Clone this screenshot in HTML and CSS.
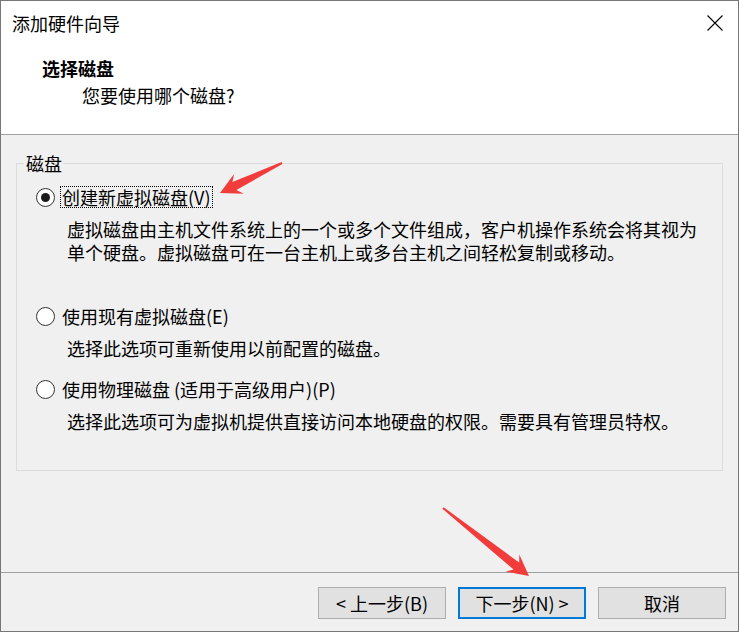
FILE: index.html
```html
<!DOCTYPE html>
<html lang="zh-CN">
<head>
<meta charset="utf-8">
<title>添加硬件向导</title>
<link rel="stylesheet" href="styles.css">
</head>
<body>
<div class="window">
  <div class="top">
    <div class="titlebar">
      <span class="title">添加硬件向导</span>
      <svg class="close" width="16" height="16" viewBox="0 0 16 16" aria-label="关闭">
        <path d="M0.5 0.5 L15.5 15.5 M15.5 0.5 L0.5 15.5" stroke="#000" stroke-width="1.1" fill="none"/>
      </svg>
    </div>
    <div class="header">
      <div class="heading">选择磁盘</div>
      <div class="subheading">您要使用哪个磁盘?</div>
    </div>
  </div>
  <div class="content">
    <fieldset class="group">
      <legend>磁盘</legend>
      <div class="options">
        <div class="option">
          <div class="choice"><span class="radio checked"></span><span class="label focus">创建新虚拟磁盘(V)</span></div>
          <p class="desc desc-tall">虚拟磁盘由主机文件系统上的一个或多个文件组成，客户机操作系统会将其视为单个硬盘。虚拟磁盘可在一台主机上或多台主机之间轻松复制或移动。</p>
        </div>
        <div class="option">
          <div class="choice"><span class="radio"></span><span class="label">使用现有虚拟磁盘(E)</span></div>
          <p class="desc">选择此选项可重新使用以前配置的磁盘。</p>
        </div>
        <div class="option">
          <div class="choice"><span class="radio"></span><span class="label">使用物理磁盘 (适用于高级用户)(P)</span></div>
          <p class="desc">选择此选项可为虚拟机提供直接访问本地硬盘的权限。需要具有管理员特权。</p>
        </div>
      </div>
    </fieldset>
  </div>
  <div class="footer">
    <button class="btn">&lt; 上一步(B)</button>
    <button class="btn btn-default">下一步(N) &gt;</button>
    <button class="btn">取消</button>
  </div>
  <svg class="annotations" width="739" height="632" viewBox="0 0 739 632">
    <polygon fill="#f23c3c" points="282.4,163.9 236.4,190.1 243.7,193.8 220,193 234.1,174.0 232.4,182.0 281.6,162.1"/>
    <polygon fill="#f23c3c" points="443.6,507.2 519.2,562.6 519.3,554.4 529,576 505.7,571.6 513.6,569.6 442.4,508.8"/>
  </svg>
</div>
</body>
</html>
```
FILE: styles.css
```css
* {
  box-sizing: border-box;
}

body {
  margin: 0;
  font-family: "Noto Sans CJK SC", sans-serif;
  font-size: 18px;
  color: #000;
  background: #fff;
}

.window {
  position: relative;
  width: 739px;
  height: 632px;
  border: 1px solid #777;
  display: flex;
  flex-direction: column;
  background: #f0f0f0;
}

.top {
  height: 134px;
  flex: none;
  background: #fff;
  border-bottom: 1px solid #a0a0a0;
}

.titlebar {
  height: 44px;
  display: flex;
  align-items: center;
  justify-content: space-between;
  padding: 0 15px 0 11px;
}

.title {
  line-height: 24px;
}

.close {
  display: block;
}

.header {
  padding: 11px 0 0 41px;
}

.heading {
  font-weight: 700;
  line-height: 24px;
}

.subheading {
  line-height: 24px;
  margin-top: 3px;
  padding-left: 40px;
}

.content {
  flex: 1;
  padding: 16px 15px 0;
}

.group {
  margin: 0;
  min-width: 0;
  border: 1px solid #dcdcdc;
  padding: 11px 14px 37px 7px;
}

.group legend {
  padding: 0 1px 0 2px;
  line-height: 24px;
}

.options {
  display: flex;
  flex-direction: column;
  gap: 18px;
  padding-left: 12px;
}

.option {
  display: flex;
  flex-direction: column;
}

.choice {
  display: flex;
  align-items: center;
  height: 22px;
}

.radio {
  width: 19px;
  height: 19px;
  flex: none;
  border: 1.5px solid #333;
  border-radius: 50%;
  background: #fff;
  display: flex;
  align-items: center;
  justify-content: center;
}

.radio.checked::after {
  content: "";
  width: 9px;
  height: 9px;
  border-radius: 50%;
  background: #1a1a1a;
}

.label {
  margin-left: 5px;
  padding: 0 1px;
  line-height: 20px;
  border: 1px dotted transparent;
  white-space: nowrap;
}

.label.focus {
  border-color: #000;
}

.desc {
  margin: 10px 0 0 31px;
  line-height: 23px;
  max-width: 640px;
}

.desc-tall {
  min-height: 69px;
}

.footer {
  height: 59px;
  flex: none;
  border-top: 1px solid #a0a0a0;
  display: flex;
  justify-content: flex-end;
  align-items: flex-start;
  gap: 12px;
  padding: 14px 12px 0 0;
}

.btn {
  width: 128px;
  height: 32px;
  padding: 0;
  font-family: "Noto Sans CJK SC", sans-serif;
  font-size: 18px;
  color: #000;
  background: #e1e1e1;
  border: 1px solid #adadad;
  border-radius: 0;
}

.btn-default {
  border: 2px solid #0078d7;
}

.annotations {
  position: absolute;
  top: -1px;
  left: -1px;
  pointer-events: none;
}
```
